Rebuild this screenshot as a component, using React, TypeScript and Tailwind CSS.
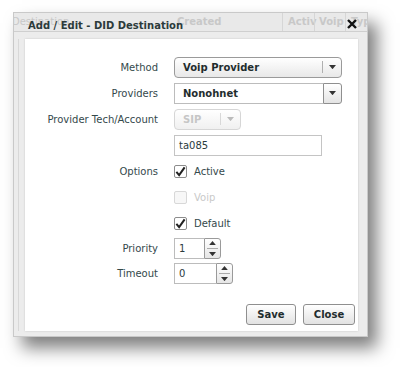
const font = { fontFamily: '"DejaVu Sans", Verdana, sans-serif' };

const Arrow = ({ up = false, size = 7, color = '#333' }: { up?: boolean; size?: number; color?: string }) => (
  <svg width={size} height={size * 0.6} viewBox="0 0 10 6">
    {up ? <path d="M0 6 L5 0 L10 6 Z" fill={color} /> : <path d="M0 0 L10 0 L5 6 Z" fill={color} />}
  </svg>
);

const Check = ({ checked, disabled = false }: { checked: boolean; disabled?: boolean }) => (
  <div
    className={`w-[13px] h-[13px] border rounded-[2px] flex items-center justify-center ${
      disabled ? 'border-[#d8d8d8] bg-[#f7f7f7]' : 'border-[#8c8c8c] bg-white'
    }`}
  >
    {checked && (
      <svg width="11" height="11" viewBox="0 0 12 12">
        <path d="M1.5 6.5 L4.5 10 L10.5 1.5" stroke="#222" strokeWidth="2.2" fill="none" />
      </svg>
    )}
  </div>
);

const Spinner = ({ value, w }: { value: string; w: string }) => (
  <div className="flex h-[21px]">
    <div className={`${w} h-full border border-[#bcbcbc] border-r-0 flex items-center pl-[4px] text-[10px] text-[#2b3b3d] bg-white`}>{value}</div>
    <div className="w-[17px] h-full border border-[#9a9a9a] rounded-r-[3px] bg-gradient-to-b from-white to-[#e6e6e6] flex flex-col items-center justify-center gap-[3px]">
      <Arrow up size={7} />
      <div className="w-[11px] h-px bg-[#aaa]" />
      <Arrow size={7} />
    </div>
  </div>
);

const Row = ({ label, children, h = 'h-[26px]' }: { label?: string; children: React.ReactNode; h?: string }) => (
  <div className={`flex items-center ${h}`}>
    <div className="w-[149px] shrink-0 text-right pr-[16px] text-[10px] text-[#34494b]">{label}</div>
    <div>{children}</div>
  </div>
);

export default function App() {
  return (
    <div className="w-[400px] h-[367px] bg-white pl-[13px] pt-[12px]" style={font}>
      <div className="w-[355px] h-[325px] bg-[#ececec] border border-[#c9c9c9] shadow-[9px_11px_16px_rgba(0,0,0,0.5)] flex flex-col">
        {/* header */}
        <div className="relative h-[19px] border-b border-[#cfcfcf] bg-[#e9e9e9] text-[10px] font-bold overflow-hidden">
          <span className="absolute -left-[2px] top-[1px] text-[#c8c8c8] font-normal">Destination</span>
          <span className="absolute left-[163px] top-[1px] text-[#c8c8c8]">Created</span>
          <div className="absolute left-[268px] top-0 h-full w-px bg-[#d6d6d6]" />
          <span className="absolute left-[274px] top-[1px] text-[#c8c8c8]">Activ</span>
          <div className="absolute left-[300px] top-0 h-full w-px bg-[#d6d6d6]" />
          <span className="absolute left-[305px] top-[1px] text-[#c8c8c8]">Voip</span>
          <div className="absolute left-[331px] top-0 h-full w-px bg-[#d6d6d6]" />
          <span className="absolute left-[337px] top-[1px] text-[#c8c8c8]">Typ</span>
          <span className="absolute left-[14px] top-[5px] text-[#2c3b3b]">Add / Edit - DID Destination</span>
          <svg className="absolute left-[333px] top-[6px]" width="10" height="10" viewBox="0 0 10 10">
            <path d="M1 1 L9 9 M9 1 L1 9" stroke="#111" strokeWidth="2.4" />
          </svg>
        </div>
        <div className="flex-1 flex pl-[4px] pr-[9px] pt-[7px] pb-[5px]">
          <div className="w-[6px] border-l border-[#d8d8d8] mr-[1px]" />
          <div className="flex-1 bg-white shadow-[0_0_2px_rgba(0,0,0,0.15)] pt-[15px]">
            <Row label="Method">
              <div className="w-[168px] h-[21px] border border-[#9a9a9a] rounded-[4px] bg-gradient-to-b from-white to-[#e8e8e8] flex items-center">
                <span className="flex-1 pl-[8px] text-[10px] font-bold text-[#1f2d2e]">Voip Provider</span>
                <div className="w-px h-[12px] bg-[#b0b0b0]" />
                <div className="w-[18px] flex justify-center"><Arrow /></div>
              </div>
            </Row>
            <Row label="Providers">
              <div className="flex h-[21px]">
                <div className="w-[149px] border border-[#bcbcbc] border-r-0 flex items-center pl-[8px] text-[10px] font-bold text-[#1f2d2e]">Nonohnet</div>
                <div className="w-[19px] border border-[#8f8f8f] rounded-r-[3px] bg-gradient-to-b from-white to-[#e4e4e4] flex items-center justify-center"><Arrow /></div>
              </div>
            </Row>
            <Row label="Provider Tech/Account">
              <div className="w-[67px] h-[21px] border border-[#d6d6d6] rounded-[4px] bg-gradient-to-b from-white to-[#f0f0f0] flex items-center">
                <span className="flex-1 pl-[8px] text-[10px] font-bold text-[#c6c6c6]">SIP</span>
                <div className="w-px h-[12px] bg-[#d8d8d8]" />
                <div className="w-[19px] flex justify-center"><Arrow color="#bbb" /></div>
              </div>
            </Row>
            <Row>
              <div className="w-[148px] h-[21px] border border-[#c4c4c4] flex items-center pl-[4px] text-[10px] text-[#2b3b3d]">ta085</div>
            </Row>
            <Row label="Options">
              <div className="flex items-center gap-[7px] text-[10px] text-[#34494b]"><Check checked />Active</div>
            </Row>
            <Row>
              <div className="flex items-center gap-[7px] text-[10px] text-[#c9c9c9]"><Check checked={false} disabled />Voip</div>
            </Row>
            <Row>
              <div className="flex items-center gap-[7px] text-[10px] text-[#34494b]"><Check checked />Default</div>
            </Row>
            <Row label="Priority" h="h-[25px]">
              <Spinner value="1" w="w-[30px]" />
            </Row>
            <Row label="Timeout" h="h-[25px]">
              <Spinner value="0" w="w-[42px]" />
            </Row>
            <div className="flex justify-end gap-[7px] pr-[3px] pt-[18px]">
              <button className="w-[50px] h-[21px] border border-[#8f8f8f] rounded-[3px] bg-gradient-to-b from-white to-[#e2e2e2] text-[10px] font-bold text-[#1f2d2e]">Save</button>
              <button className="w-[52px] h-[21px] border border-[#8f8f8f] rounded-[3px] bg-gradient-to-b from-white to-[#e2e2e2] text-[10px] font-bold text-[#1f2d2e]">Close</button>
            </div>
          </div>
        </div>
      </div>
    </div>
  );
}
